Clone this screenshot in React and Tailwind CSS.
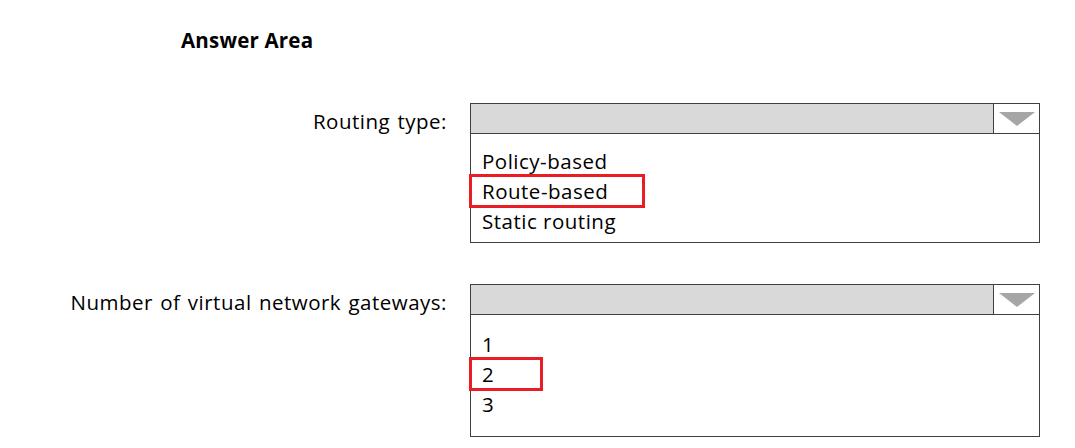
import React from 'react';

const rows = [
  {
    label: 'Routing type:',
    options: ['Policy-based', 'Route-based', 'Static routing'],
    picked: 1,
    pickedWidth: 'w-[176px]',
    listPad: 'pt-[12px] pb-[6px]',
  },
  {
    label: 'Number of virtual network gateways:',
    options: ['1', '2', '3'],
    picked: 1,
    pickedWidth: 'w-[74px]',
    listPad: 'pt-[14px] pb-[17px]',
  },
];

function Caret() {
  return (
    <svg width="38" height="16" viewBox="0 0 38 16">
      <polygon points="1,1 37,1 19,15" fill="#a6a6a6" />
    </svg>
  );
}

function Dropdown({ options, picked, pickedWidth, listPad }) {
  return (
    <div className="w-[570px] border border-[#404040] bg-white">
      <div className="flex h-[30px] border-b border-[#404040]">
        <div className="flex-1 bg-[#d9d9d9]" />
        <div className="flex w-[46px] items-center justify-center border-l border-[#404040] bg-white">
          <Caret />
        </div>
      </div>
      <div className={listPad}>
        {options.map((opt, i) => (
          <div key={opt} className="flex h-[30px] items-center">
            {i === picked ? (
              <span className={`-ml-[2px] flex h-[34px] items-center border-[3px] border-[#ea1c24] pl-[10px] ${pickedWidth}`}>
                {opt}
              </span>
            ) : (
              <span className="pl-[11px]">{opt}</span>
            )}
          </div>
        ))}
      </div>
    </div>
  );
}

export default function App() {
  return (
    <div className="h-[448px] w-[1075px] bg-white font-['Open_Sans',sans-serif] text-[20.5px] tracking-[0.5px] text-black">
      <div className="pl-[181px] pt-[26px] text-[20.5px] font-bold leading-[28px] tracking-[0.2px]">Answer Area</div>
      <div className="mt-[49px] flex flex-col gap-[41px]">
        {rows.map((row) => (
          <div key={row.label} className="flex items-start">
            <div className="flex h-[36px] w-[448px] items-center justify-end pr-[1px] [word-spacing:1.5px]">
              {row.label}
            </div>
            <div className="ml-[22px]">
              <Dropdown {...row} />
            </div>
          </div>
        ))}
      </div>
    </div>
  );
}
